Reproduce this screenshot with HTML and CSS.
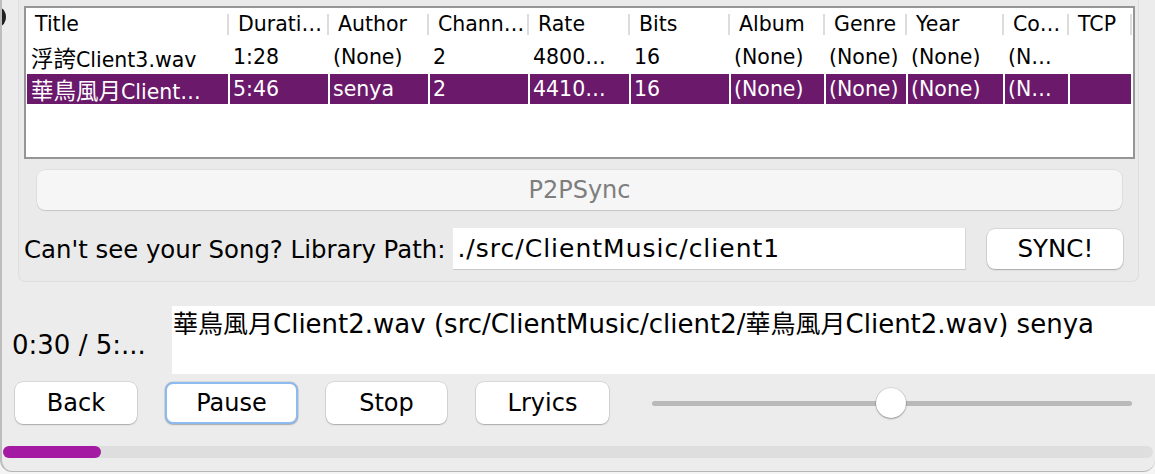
FILE: index.html
```html
<!DOCTYPE html>
<html>
<head>
<meta charset="utf-8">
<link rel="stylesheet" href="styles.css">
</head>
<body>
<div class="window">
  <div class="behind"></div>
  <div class="panel">
    <div class="scroll">
      <div class="grid">
        <div class="hc">Title</div>
        <div class="hc">Durati…</div>
        <div class="hc">Author</div>
        <div class="hc">Chann…</div>
        <div class="hc">Rate</div>
        <div class="hc">Bits</div>
        <div class="hc">Album</div>
        <div class="hc">Genre</div>
        <div class="hc">Year</div>
        <div class="hc">Co…</div>
        <div class="hc">TCP</div>

        <div class="c"><span class="cj">浮誇</span>Client3.wav</div>
        <div class="c">1:28</div>
        <div class="c">(None)</div>
        <div class="c">2</div>
        <div class="c">4800…</div>
        <div class="c">16</div>
        <div class="c">(None)</div>
        <div class="c">(None)</div>
        <div class="c">(None)</div>
        <div class="c">(N…</div>
        <div class="c"></div>

        <div class="c sel"><span class="cj">華鳥風月</span>Client…</div>
        <div class="c sel">5:46</div>
        <div class="c sel">senya</div>
        <div class="c sel">2</div>
        <div class="c sel">4410…</div>
        <div class="c sel">16</div>
        <div class="c sel">(None)</div>
        <div class="c sel">(None)</div>
        <div class="c sel">(None)</div>
        <div class="c sel">(N…</div>
        <div class="c sel"></div>
      </div>
    </div>
    <div class="p2p">P2PSync</div>
    <div class="pathrow">
      <span class="label">Can't see your Song? Library Path:</span>
      <div class="input">./src/ClientMusic/client1</div>
      <div class="btn sync">SYNC!</div>
    </div>
  </div>

  <div class="nowrow">
    <div class="time">0:30 / 5:...</div>
    <div class="info"><span class="cj">華鳥風月</span>Client2.wav (src/ClientMusic/client2/<span class="cj">華鳥風月</span>Client2.wav) senya</div>
  </div>

  <div class="controls">
    <div class="btn back">Back</div>
    <div class="btn pause">Pause</div>
    <div class="btn stop">Stop</div>
    <div class="btn lyr">Lryics</div>
    <div class="slider">
      <div class="track"></div>
      <div class="knob" style="left: 46.6%"></div>
    </div>
  </div>

  <div class="progress">
    <div class="fill" style="width: 8.5%"></div>
  </div>
</div>
</body>
</html>
```

FILE: styles.css
```css
* { box-sizing: border-box; }
html, body {
  margin: 0;
  padding: 0;
  background: #f4f4f4;
}
body {
  width: 1155px;
  height: 474px;
  overflow: hidden;
  font-family: "DejaVu Sans", "Noto Sans CJK TC", sans-serif;
  font-size: 20.5px;
  color: #000;
}
.cj {
  font-family: "Noto Sans CJK TC", sans-serif;
}
.window {
  position: relative;
  width: 1155px;
  height: 472px;
  background: #ececec;
  border-left: 2px solid #bdbdbd;
  border-bottom: 1px solid #b5b5b5;
  border-bottom-left-radius: 12px;
  border-bottom-right-radius: 12px;
  overflow: hidden;
}
.behind {
  position: absolute;
  left: -8px;
  top: 8px;
  width: 12px;
  height: 18px;
  border-radius: 50%;
  background: #222;
}
.panel {
  margin-left: 16px;
  width: 1121px;
  border: 1px solid #dedede;
  border-top: none;
  border-radius: 0 0 7px 7px;
  background: #eaeaea;
  padding: 6px 3px 11px 5px;
}
.scroll {
  height: 153px;
  background: #fff;
  border: 2px solid #959595;
}
.grid {
  display: grid;
  grid-template-columns: 203px 100px 100px 100px 101px 100px 95px 82px 97px 65px 63px;
  grid-template-rows: 33px 32px 32px;
}
.hc {
  padding-left: 9px;
  line-height: 33px;
  white-space: nowrap;
  overflow: hidden;
  background: linear-gradient(#dcdcdc, #dcdcdc) right 6px / 2px 21px no-repeat;
}
.c {
  padding-left: 3px;
  line-height: 30px;
  white-space: nowrap;
  overflow: hidden;
  border: 1px solid #fff;
}
.c .cj {
  font-size: 22.5px;
}
.c:first-child, .c:nth-child(11n+1) {
  padding-left: 4px;
}
.c.sel {
  background: #6b196b;
  color: #fff;
  background-clip: padding-box;
}
.p2p {
  margin: 11px 13px 0 13px;
  height: 40px;
  border-radius: 8px;
  background: #f6f6f6;
  box-shadow: 0 0 0 0.5px rgba(0,0,0,0.08), 0 1px 1px rgba(0,0,0,0.12);
  color: #7e7e7e;
  font-size: 24px;
  text-align: center;
  line-height: 40px;
}
.pathrow {
  display: flex;
  align-items: center;
  margin-top: 18px;
}
.label {
  white-space: nowrap;
  font-size: 24.4px;
}
.input {
  margin-left: 8px;
  width: 513px;
  height: 42px;
  background: #fff;
  border-right: 1px solid #d6d6d6;
  border-bottom: 1px solid #c9c9c9;
  padding-left: 4px;
  font-size: 25px;
  letter-spacing: 1px;
  line-height: 42px;
  white-space: nowrap;
}
.btn {
  background: #fff;
  border-radius: 8px;
  box-shadow: 0 0 0 0.5px rgba(0,0,0,0.16), 0 1px 1.5px rgba(0,0,0,0.22);
  text-align: center;
  white-space: nowrap;
  font-size: 24px;
}
.sync {
  margin-left: 21px;
  width: 136px;
  height: 40px;
  line-height: 40px;
  font-size: 24.5px;
}
.nowrow {
  display: flex;
  margin-top: 24px;
  height: 68px;
}
.time {
  width: 170px;
  padding-left: 10px;
  padding-top: 24px;
  line-height: 30px;
  font-size: 26px;
  white-space: nowrap;
}
.info {
  flex: 1;
  background: #fff;
  padding-left: 1px;
  font-size: 26px;
  line-height: 32px;
  white-space: nowrap;
}
.info .cj {
  font-size: 25px;
}
.controls {
  display: flex;
  align-items: center;
  height: 44px;
  margin-top: 7px;
  padding-left: 13px;
}
.controls .btn {
  height: 42px;
  line-height: 42px;
}
.back { width: 122px; }
.pause {
  margin-left: 28px;
  width: 133px;
  border: 2px solid #8dbbf0;
  line-height: 38px !important;
}
.stop { margin-left: 28px; width: 121px; }
.lyr { margin-left: 29px; width: 133px; }
.slider {
  position: relative;
  margin-left: 43px;
  width: 480px;
  height: 30px;
  display: flex;
  align-items: center;
}
.track {
  flex: 1;
  height: 5px;
  border-radius: 3px;
  background: #b9b9b9;
}
.knob {
  position: absolute;
  top: 0;
  width: 30px;
  height: 30px;
  border-radius: 50%;
  background: #fff;
  box-shadow: 0 0 0 0.5px rgba(0,0,0,0.15), 0 1px 2px rgba(0,0,0,0.3);
}
.progress {
  margin: 21px 0 0 1px;
  width: 1150px;
  height: 12px;
  border-radius: 6px;
  background: #dedede;
}
.fill {
  height: 12px;
  border-radius: 6px;
  background: #a41aa3;
}
```
